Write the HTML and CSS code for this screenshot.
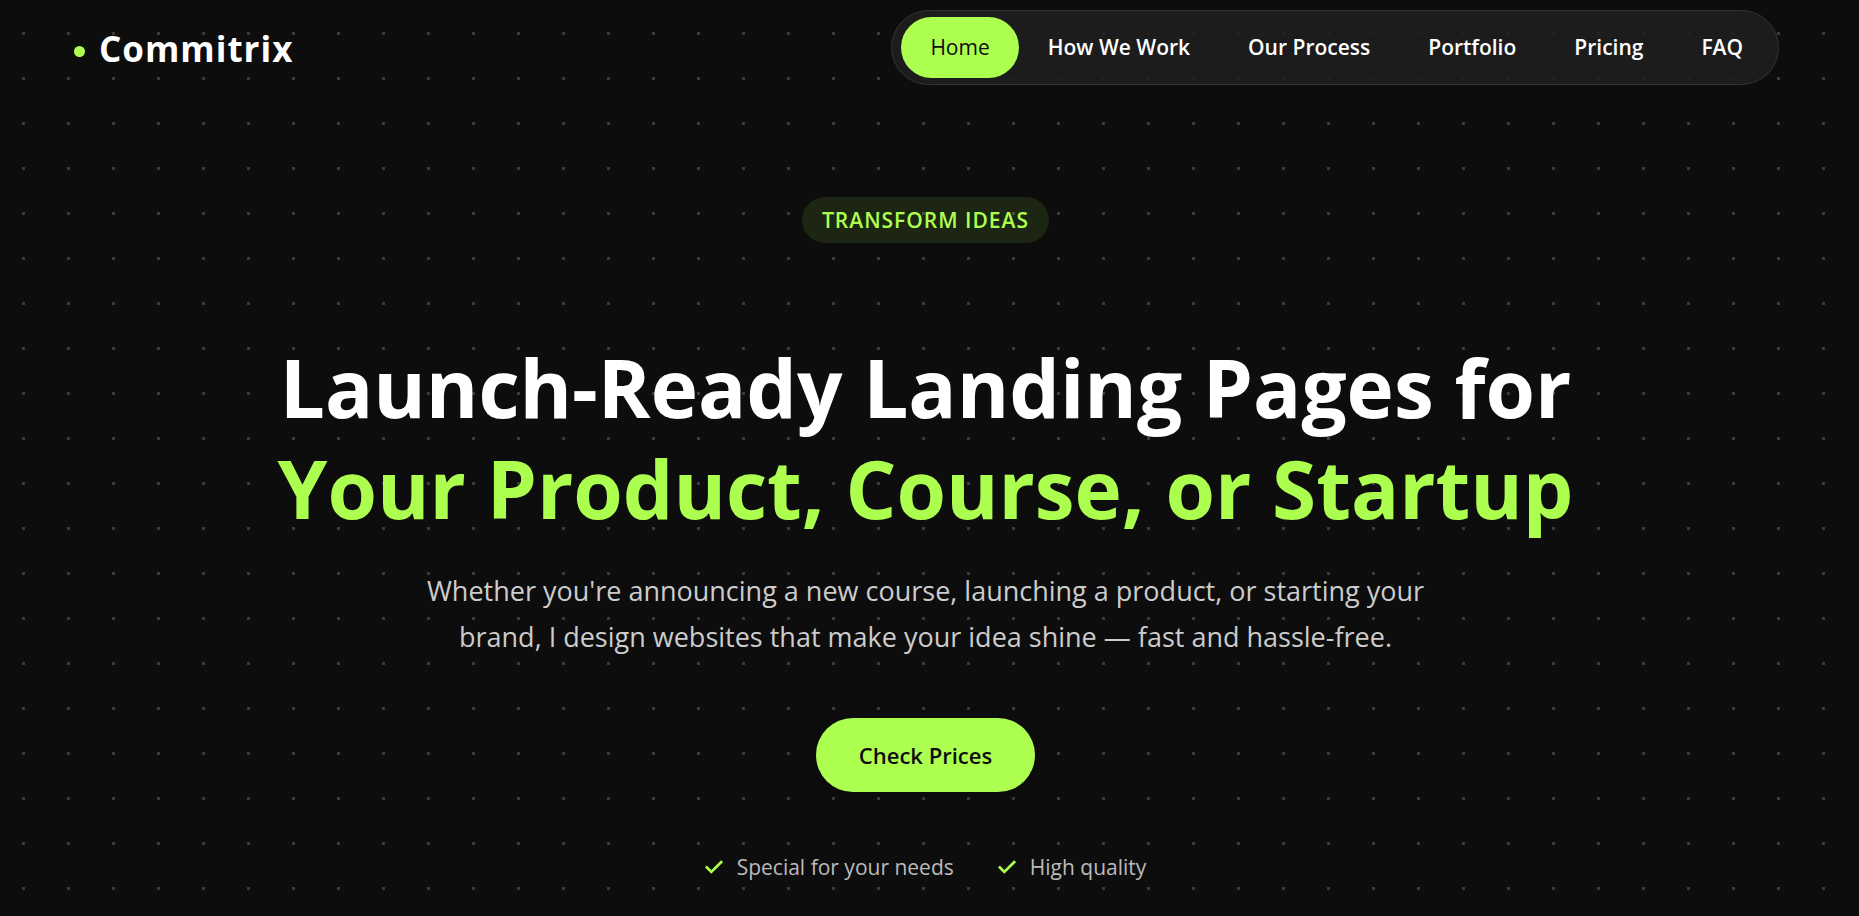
FILE: index.html
```html
<!DOCTYPE html>
<html lang="en">
<head>
<meta charset="utf-8">
<meta name="viewport" content="width=device-width, initial-scale=1">
<title>Commitrix</title>
<link rel="stylesheet" href="styles.css">
</head>
<body>
<header class="header">
  <a class="logo" href="#"><span class="logo-dot"></span>Commitrix</a>
  <nav class="nav">
    <a class="nav-link nav-link-active" href="#home">Home</a>
    <a class="nav-link" href="#how">How We Work</a>
    <a class="nav-link" href="#process">Our Process</a>
    <a class="nav-link" href="#portfolio">Portfolio</a>
    <a class="nav-link" href="#pricing">Pricing</a>
    <a class="nav-link" href="#faq">FAQ</a>
  </nav>
</header>
<main class="hero" id="home">
  <span class="badge">TRANSFORM IDEAS</span>
  <h1 class="title">Launch-Ready Landing Pages for<br><span class="title-accent">Your Product, Course, or Startup</span></h1>
  <p class="lead">Whether you're announcing a new course, launching a product, or starting your<br>brand, I design websites that make your idea shine — fast and hassle-free.</p>
  <button class="cta" type="button">Check Prices</button>
  <ul class="features">
    <li class="feature"><svg class="check" viewBox="0 0 20 16" aria-hidden="true"><path d="M1 7.500l6 6L19 1.500"/></svg>Special for your needs</li>
    <li class="feature"><svg class="check" viewBox="0 0 20 16" aria-hidden="true"><path d="M1 7.500l6 6L19 1.500"/></svg>High quality</li>
  </ul>
</main>
</body>
</html>
```
FILE: styles.css
```css
* { box-sizing: border-box; }
body {
  margin: 0;
  min-height: 100vh;
  font-family: "Open Sans", "Noto Sans", sans-serif;
  color: #fff;
  background: #0d0d0d radial-gradient(circle, #3a3a3a 1.5px, transparent 1.5px) 1px 11px / 45px 45px;
}
.header {
  display: flex;
  justify-content: space-between;
  align-items: center;
  padding: 10px 80px 0 74px;
}
.logo {
  display: flex;
  align-items: center;
  gap: 14px;
  padding-top: 2px;
  color: #fff;
  font-size: 35px;
  line-height: 48px;
  font-weight: 700;
  letter-spacing: 1px;
  text-decoration: none;
}
.logo-dot {
  width: 11px;
  height: 11px;
  margin-top: 6px;
  border-radius: 50%;
  background: #adff4f;
}
.nav {
  display: flex;
  padding: 6px 6px 6px 9px;
  border: 1px solid #333;
  border-radius: 38px;
  background: rgba(31, 31, 31, 0.88);
}
.nav-link {
  padding: 0 29px;
  border-radius: 31px;
  color: #fff;
  font-size: 21px;
  line-height: 61px;
  font-weight: 600;
  text-decoration: none;
}
.nav-link-active {
  color: #0d0d0d;
  background: #adff4f;
  font-weight: 500;
}
.hero {
  display: flex;
  flex-direction: column;
  align-items: center;
  padding: 112px 8px 24px 0;
  text-align: center;
}
.badge {
  padding: 0 20px;
  border-radius: 23px;
  background: rgba(173, 255, 79, 0.1);
  color: #adff4f;
  font-size: 21px;
  line-height: 46px;
  font-weight: 600;
  letter-spacing: 1px;
}
.title {
  margin: 93px 0 0;
  font-size: 80px;
  line-height: 101px;
  font-weight: 700;
}
.title-accent { color: #adff4f; }
.lead {
  margin: 30px 0 0;
  color: #ccc;
  font-size: 27px;
  line-height: 46px;
}
.cta {
  margin-top: 58px;
  padding: 0 43px;
  border: 0;
  border-radius: 37px;
  background: #adff4f;
  box-shadow: 0 4px 15px rgba(0, 0, 0, 0.2);
  color: #0d0d0d;
  font: 600 22px/74px "Open Sans", "Noto Sans", sans-serif;
}
.features {
  display: flex;
  gap: 44px;
  margin: 58px 0 0;
  padding: 0;
  list-style: none;
  color: #bbb;
  font-size: 21px;
  line-height: 34px;
}
.feature {
  display: flex;
  align-items: center;
  gap: 14px;
}
.check {
  width: 18px;
  height: 16px;
  fill: none;
  stroke: #adff4f;
  stroke-width: 3;
}
```
